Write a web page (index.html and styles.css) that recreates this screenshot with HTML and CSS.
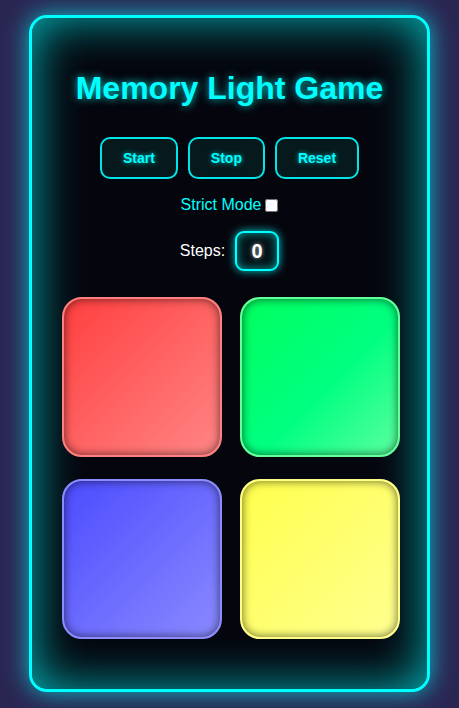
FILE: index.html
```html
<!DOCTYPE html>
<html>
<head>
<meta charset="utf-8">
<link rel="stylesheet" href="styles.css">
</head>
<body>
<div class="game">
  <h1 class="title">Memory Light Game</h1>
  <div class="controls">
    <button class="btn">Start</button>
    <button class="btn">Stop</button>
    <button class="btn">Reset</button>
  </div>
  <label class="strict">Strict Mode <input type="checkbox" class="check"></label>
  <div class="steps">
    <span class="steps-label">Steps:</span>
    <span class="steps-count">0</span>
  </div>
  <div class="board">
    <div class="tile red"></div>
    <div class="tile green"></div>
    <div class="tile blue"></div>
    <div class="tile yellow"></div>
  </div>
</div>
</body>
</html>
```

FILE: styles.css
```css
html, body {
  margin: 0;
  padding: 0;
}
body {
  background: #2a2652;
  font-family: "Liberation Sans", Arial, sans-serif;
  min-height: 708px;
  display: flex;
  justify-content: center;
  align-items: flex-start;
}
.game {
  margin-top: 15px;
  width: 395px;
  height: 671px;
  box-sizing: content-box;
  border: 3px solid #00ffff;
  border-radius: 18px;
  background: #05050d;
  box-shadow: 0 0 24px rgba(0, 255, 255, 0.7), inset 0 0 50px rgba(0, 255, 255, 0.72);
  display: flex;
  flex-direction: column;
  align-items: center;
}
.title {
  margin: 52px 0 0;
  font-size: 32px;
  line-height: 37px;
  font-weight: bold;
  color: #00ffff;
  text-shadow: 0 0 8px rgba(0, 255, 255, 0.8);
}
.controls {
  margin-top: 30px;
  display: flex;
  gap: 10px;
}
.btn {
  font-family: "Liberation Sans", Arial, sans-serif;
  font-size: 14px;
  font-weight: bold;
  line-height: 16px;
  padding: 11px 21px;
  color: #00ffff;
  background: #06191d;
  border: 2px solid #00e5e8;
  border-radius: 10px;
  text-shadow: 0 0 5px rgba(0, 255, 255, 0.7);
}
.strict {
  margin-top: 16px;
  font-size: 16px;
  line-height: 20px;
  color: #00ffff;
  display: flex;
  align-items: center;
  gap: 4px;
}
.check {
  margin: 0;
  width: 13px;
  height: 13px;
}
.steps {
  margin-top: 16px;
  display: flex;
  align-items: center;
  gap: 10px;
}
.steps-label {
  color: #ffffff;
  font-size: 16px;
}
.steps-count {
  width: 40px;
  height: 36px;
  border: 2px solid #00ffff;
  border-radius: 9px;
  background: #041317;
  color: #ffffff;
  font-size: 20px;
  font-weight: bold;
  display: flex;
  align-items: center;
  justify-content: center;
  box-shadow: 0 0 8px rgba(0, 255, 255, 0.8), inset 0 0 10px rgba(0, 255, 255, 0.6);
  text-shadow: 0 0 4px rgba(255, 255, 255, 0.6);
}
.board {
  margin-top: 26px;
  margin-left: 3px;
  display: grid;
  grid-template-columns: 160px 160px;
  column-gap: 18px;
  row-gap: 22px;
}
.tile {
  width: 160px;
  height: 160px;
  box-sizing: border-box;
  border: 2px solid;
  border-radius: 20px;
  box-shadow: inset 0 0 10px rgba(0, 0, 0, 0.6);
}
.red {
  border-color: #ff8080;
  background: linear-gradient(135deg, #ff3f3f 0%, #ff8585 100%);
}
.green {
  border-color: #66ff99;
  background: linear-gradient(135deg, #00ff5e 0%, #00ff80 55%, #5cff9f 100%);
}
.blue {
  border-color: #8c8cff;
  background: linear-gradient(135deg, #4c4cff 0%, #8a8aff 100%);
}
.yellow {
  border-color: #ffff88;
  background: linear-gradient(135deg, #ffff4d 0%, #ffff90 100%);
}
```
